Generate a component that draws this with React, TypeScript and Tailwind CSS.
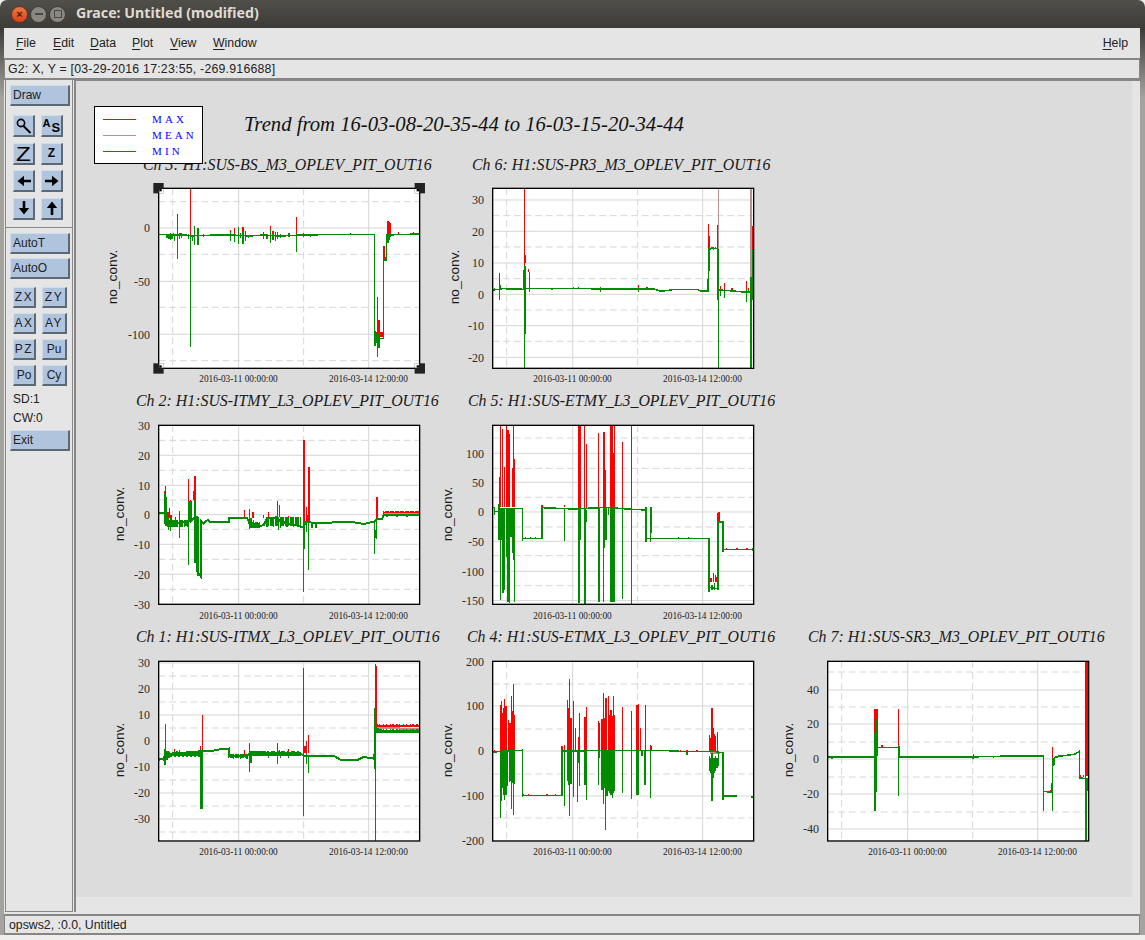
import React from 'react';

type Seg = [number, number, number];
type Pt = [number, number];

type ChartData = {
  key: string;
  box: string;
  title: string;
  titleX: number;
  titleY: number;
  labelX: number;
  ox: number;
  oy: number;
  height: number;
  lineWidth: number;
  major: { y: number; label: string }[];
  minor: number[];
  line: Pt[];
  line2?: Pt[];
  redLine?: Pt[];
  meanLine?: Pt[];
  green: Seg[];
  red: Seg[];
  mean?: Seg[];
  selected?: boolean;
};

// fuzz on a flat part of a trace, same result every run
const noise = (from: number, to: number, step: number, top: number, bottom: number): Seg[] => {
  const out: Seg[] = [];
  for (let x = from; x <= to; x += step) {
    const k = (x * 7) % 5;
    out.push([x, top + k, bottom - ((x * 3) % 4)]);
  }
  return out;
};

const charts: ChartData[] = [
  {
    key: 'ch3', box: 'left-[82px] top-[107px]', title: 'Ch 3: H1:SUS-BS_M3_OPLEV_PIT_OUT16', titleX: -15, titleY: -18, labelX: -41, ox: 205, oy: 265, height: 540, lineWidth: 4.5,
    major: [{ y: 119, label: '0' }, { y: 279, label: '-50' }, { y: 438, label: '-100' }],
    minor: [40, 198, 357, 517],
    line: [[205, 403], [228, 403], [240, 406], [275, 405], [295, 406], [300, 408], [340, 406], [420, 405], [480, 408], [520, 405], [570, 408], [640, 405], [700, 404], [800, 404], [852, 403], [852, 716], [880, 716], [880, 480], [889, 480], [889, 405], [985, 402]],
    green: [[230, 403, 415], [236, 403, 418], [240, 403, 420], [245, 403, 416], [252, 403, 422], [262, 403, 476], [268, 403, 418], [273, 403, 414], [295, 403, 418], [301, 405, 740], [307, 405, 422], [313, 378, 436], [323, 383, 436], [340, 403, 410], [420, 395, 423], [432, 400, 427], [445, 380, 432], [450, 400, 415], [458, 395, 433], [465, 400, 422], [475, 405, 414], [485, 405, 412], [520, 398, 417], [530, 402, 418], [540, 390, 428], [548, 400, 420], [555, 400, 424], [562, 400, 418], [570, 403, 414], [580, 405, 412], [596, 400, 411], [619, 400, 456], [640, 403, 410], [660, 403, 410], [854, 700, 738], [858, 700, 728], [862, 710, 770], [866, 700, 745], [880, 470, 482], [889, 420, 432], [893, 405, 428], [897, 398, 420], [901, 400, 412]],
    red: [[240, 400, 406], [250, 400, 406], [262, 342, 405], [268, 398, 405], [272, 400, 405], [301, 265, 405], [340, 402, 405], [360, 402, 405], [420, 390, 403], [432, 383, 405], [445, 380, 403], [458, 380, 403], [465, 392, 403], [520, 396, 403], [540, 378, 403], [548, 392, 403], [555, 395, 403], [562, 396, 403], [619, 351, 403], [640, 400, 405], [780, 400, 405], [854, 692, 708], [858, 695, 708], [862, 591, 710], [866, 660, 710], [870, 695, 710], [875, 697, 710], [881, 437, 480], [885, 470, 480], [893, 363, 405], [897, 366, 405], [901, 370, 400], [925, 396, 403], [970, 395, 403]],
    selected: true,
  },
  {
    key: 'ch6', box: 'left-[416px] top-[107px]', title: 'Ch 6: H1:SUS-PR3_M3_OPLEV_PIT_OUT16', titleX: -20, titleY: -18, labelX: -33, ox: 157, oy: 115, height: 540, lineWidth: 4.5,
    major: [{ y: 35, label: '30' }, { y: 129, label: '20' }, { y: 224, label: '10' }, { y: 318, label: '0' }, { y: 412, label: '-10' }, { y: 507, label: '-20' }],
    minor: [82, 176, 271, 365, 459],
    line: [[157, 420], [175, 418], [185, 416], [230, 417], [250, 418], [255, 415], [400, 415], [480, 417], [590, 417], [640, 417], [660, 423], [680, 422], [700, 418], [770, 418], [780, 423], [803, 424], [806, 296], [832, 296], [835, 420], [880, 423], [920, 427], [930, 425], [940, 425]],
    green: [[163, 415, 424], [178, 405, 450], [181, 405, 418], [250, 360, 420], [253, 345, 655], [256, 348, 552], [268, 367, 425], [335, 415, 420], [480, 412, 426], [595, 410, 426], [640, 415, 420], [806, 295, 362], [810, 295, 300], [820, 292, 300], [833, 308, 450], [835, 296, 655], [841, 420, 438], [853, 418, 444], [919, 420, 456], [925, 420, 430], [932, 380, 655], [934, 380, 655], [937, 297, 450]],
    red: [[178, 368, 415], [253, 115, 415], [256, 315, 340], [265, 358, 365], [400, 412, 417], [415, 412, 417], [480, 410, 417], [595, 405, 417], [620, 412, 417], [805, 222, 318], [808, 258, 300], [815, 290, 296], [826, 290, 296], [832, 225, 296], [841, 408, 420], [853, 398, 420], [875, 415, 422], [919, 393, 425], [925, 415, 425], [937, 228, 300]],
    mean: [[835, 115, 296], [932, 115, 380], [934, 115, 380]],
  },
  {
    key: 'ch2', box: 'left-[82px] top-[344px]', title: 'Ch 2: H1:SUS-ITMY_L3_OPLEV_PIT_OUT16', titleX: -22, titleY: -19, labelX: -34, ox: 175, oy: 106, height: 537, lineWidth: 6,
    major: [{ y: 0, label: '30' }, { y: 90, label: '20' }, { y: 180, label: '10' }, { y: 268, label: '0' }, { y: 357, label: '-10' }, { y: 447, label: '-20' }, { y: 537, label: '-30' }],
    minor: [45, 135, 224, 312, 402, 492],
    line: [[175, 369], [195, 369], [195, 400], [220, 400], [245, 396], [262, 392], [265, 392], [265, 335], [272, 335], [272, 392], [285, 380], [290, 380], [291, 545], [301, 558], [301, 392], [310, 400], [322, 390], [330, 396], [385, 397], [388, 384], [440, 384], [450, 405], [470, 412], [490, 405], [500, 385], [530, 382], [540, 395], [565, 400], [610, 412], [615, 395], [650, 400], [670, 400], [720, 395], [760, 397], [790, 402], [820, 395], [830, 388], [845, 388], [850, 375], [958, 376]],
    redLine: [[850, 368], [958, 368]],
    meanLine: [[850, 372], [958, 372]],
    green: [...noise(197, 262, 5, 385, 412), ...noise(450, 480, 4, 395, 416), ...noise(500, 600, 5, 382, 410), [193, 310, 400], [197, 320, 400], [200, 380, 405], [205, 380, 420], [210, 385, 422], [218, 390, 410], [228, 390, 405], [238, 390, 443], [265, 340, 525], [270, 332, 400], [284, 330, 518], [290, 380, 545], [293, 380, 558], [301, 390, 563], [385, 380, 400], [448, 378, 416], [452, 385, 413], [460, 390, 412], [505, 380, 400], [515, 380, 403], [525, 378, 395], [535, 380, 420], [540, 390, 415], [610, 385, 605], [612, 395, 476], [618, 395, 425], [625, 400, 540], [635, 400, 415], [647, 396, 414], [823, 392, 493], [826, 420, 445], [829, 388, 447], [860, 372, 380], [890, 372, 380], [920, 372, 380], [950, 372, 378]],
    red: [...noise(850, 958, 5, 364, 372), [193, 303, 320], [196, 288, 320], [203, 365, 385], [208, 354, 385], [212, 374, 392], [225, 380, 400], [238, 363, 395], [265, 267, 340], [270, 330, 340], [281, 303, 330], [284, 258, 330], [291, 510, 520], [301, 388, 395], [433, 360, 385], [448, 357, 385], [458, 365, 385], [490, 376, 385], [505, 367, 385], [532, 333, 380], [538, 345, 380], [565, 378, 400], [611, 150, 390], [613, 297, 395], [618, 350, 395], [622, 375, 395], [626, 231, 395], [830, 321, 388], [826, 424, 432], [850, 368, 375]],
  },
  {
    key: 'ch5', box: 'left-[416px] top-[344px]', title: 'Ch 5: H1:SUS-ETMY_L3_OPLEV_PIT_OUT16', titleX: -24, titleY: -19, labelX: -40, ox: 157, oy: 106, height: 537, lineWidth: 4.5,
    major: [{ y: 84, label: '100' }, { y: 171, label: '50' }, { y: 260, label: '0' }, { y: 348, label: '-50' }, { y: 438, label: '-100' }, { y: 526, label: '-150' }],
    minor: [38, 129, 216, 305, 391, 481],
    line: [[157, 352], [163, 352], [163, 365], [178, 365], [182, 355], [247, 355], [247, 445], [305, 445], [305, 353], [350, 355], [400, 357], [440, 355], [500, 352], [560, 357], [615, 360], [617, 445], [800, 446], [806, 446], [806, 592], [832, 596], [832, 396], [848, 396], [848, 478], [940, 478]],
    green: [[163, 352, 375], [175, 342, 450], [178, 342, 450], [181, 355, 630], [185, 355, 450], [188, 355, 610], [193, 355, 600], [198, 355, 500], [201, 355, 635], [205, 355, 635], [208, 355, 640], [212, 355, 440], [217, 355, 490], [219, 355, 510], [222, 355, 635], [247, 355, 452], [373, 355, 452], [416, 355, 640], [420, 355, 450], [434, 355, 642], [438, 360, 395], [475, 355, 450], [476, 355, 636], [490, 355, 635], [493, 355, 475], [497, 355, 450], [505, 355, 375], [512, 355, 635], [516, 355, 635], [519, 355, 635], [523, 355, 635], [547, 355, 627], [574, 355, 642], [617, 350, 455], [630, 350, 457], [634, 350, 430], [806, 560, 607], [815, 585, 600], [822, 580, 600], [833, 396, 600], [835, 396, 425], [848, 396, 486], [938, 474, 484]],
    red: [[178, 260, 355], [181, 106, 350], [187, 118, 350], [193, 230, 350], [198, 106, 350], [203, 120, 350], [207, 132, 350], [217, 233, 350], [220, 106, 350], [223, 207, 350], [305, 345, 352], [373, 346, 352], [416, 106, 355], [419, 106, 355], [433, 106, 355], [438, 162, 355], [475, 130, 355], [490, 127, 355], [493, 127, 355], [496, 240, 355], [512, 106, 355], [515, 106, 355], [519, 190, 355], [523, 106, 355], [547, 155, 355], [574, 106, 355], [616, 352, 358], [630, 352, 400], [634, 360, 400], [806, 537, 575], [812, 565, 575], [820, 548, 575], [825, 556, 575], [829, 562, 575], [833, 368, 396], [836, 366, 396], [650, 443, 446], [715, 441, 446], [745, 441, 446], [255, 441, 445], [270, 441, 445], [285, 441, 445], [858, 474, 478], [890, 474, 478], [920, 474, 478], [938, 474, 478]],
  },
  {
    key: 'ch1', box: 'left-[82px] top-[580px]', title: 'Ch 1: H1:SUS-ITMX_L3_OPLEV_PIT_OUT16', titleX: -22, titleY: -19, labelX: -34, ox: 175, oy: 110, height: 539, lineWidth: 6,
    major: [{ y: 5, label: '30' }, { y: 83, label: '20' }, { y: 161, label: '10' }, { y: 239, label: '0' }, { y: 317, label: '-10' }, { y: 395, label: '-20' }, { y: 473, label: '-30' }],
    minor: [44, 122, 200, 278, 356, 434, 512],
    line: [[175, 405], [195, 400], [205, 392], [240, 385], [300, 380], [340, 378], [370, 372], [385, 375], [385, 393], [440, 395], [450, 383], [495, 383], [510, 392], [540, 385], [600, 385], [612, 395], [650, 393], [700, 393], [720, 405], [770, 407], [790, 397], [822, 402], [826, 310], [850, 320], [958, 320]],
    redLine: [[830, 303], [958, 304]],
    meanLine: [[830, 311], [958, 312]],
    green: [...noise(830, 958, 4, 313, 328), ...noise(200, 300, 6, 380, 396), ...noise(390, 440, 5, 388, 402), ...noise(455, 600, 6, 378, 396), [178, 400, 410], [190, 395, 408], [193, 372, 420], [196, 297, 422], [200, 385, 405], [206, 385, 400], [223, 380, 392], [237, 380, 398], [301, 380, 553], [305, 380, 553], [385, 370, 400], [400, 390, 400], [448, 385, 443], [452, 385, 415], [505, 385, 400], [532, 385, 418], [540, 385, 400], [565, 385, 400], [610, 385, 573], [618, 385, 418], [625, 390, 446], [826, 180, 650], [824, 250, 432], [822, 395, 405]],
    red: [...noise(830, 958, 4, 298, 309), [193, 372, 385], [205, 380, 395], [223, 372, 385], [237, 375, 385], [300, 363, 380], [307, 270, 380], [388, 368, 380], [433, 375, 390], [448, 354, 385], [505, 380, 385], [532, 354, 385], [537, 375, 385], [565, 372, 385], [610, 130, 385], [614, 365, 385], [619, 350, 385], [625, 330, 385], [825, 117, 180], [829, 125, 310], [850, 297, 310]],
  },
  {
    key: 'ch4', box: 'left-[416px] top-[580px]', title: 'Ch 4: H1:SUS-ETMX_L3_OPLEV_PIT_OUT16', titleX: -25, titleY: -19, labelX: -40, ox: 157, oy: 110, height: 539, lineWidth: 4.5,
    major: [{ y: 0, label: '200' }, { y: 134, label: '100' }, { y: 269, label: '0' }, { y: 404, label: '-100' }, { y: 539, label: '-200' }],
    minor: [68, 203, 338, 470],
    line: [[157, 383], [180, 380], [247, 377], [247, 512], [365, 512], [365, 379], [560, 377], [600, 377], [680, 378], [740, 381], [805, 381], [810, 378], [848, 385], [848, 514], [890, 514]],
    line2: [[933, 517], [940, 517]],
    meanLine: [[808, 385], [838, 385]],
    green: [[181, 378, 580], [184, 378, 530], [187, 378, 490], [190, 378, 510], [193, 378, 525], [196, 378, 510], [199, 378, 512], [202, 378, 485], [208, 378, 473], [211, 378, 470], [214, 378, 552], [217, 378, 475], [220, 378, 570], [223, 378, 478], [247, 377, 518], [365, 379, 490], [373, 379, 545], [382, 379, 470], [385, 379, 480], [388, 379, 573], [392, 379, 478], [400, 379, 518], [412, 379, 533], [416, 379, 415], [418, 379, 485], [434, 379, 480], [439, 379, 525], [475, 379, 480], [478, 379, 400], [485, 379, 495], [490, 379, 537], [494, 379, 490], [496, 379, 615], [500, 379, 515], [505, 379, 500], [508, 379, 505], [512, 379, 510], [516, 379, 520], [520, 379, 505], [523, 379, 498], [547, 379, 504], [574, 379, 522], [590, 379, 510], [595, 379, 510], [605, 379, 395], [614, 379, 480], [630, 379, 519], [740, 379, 390], [808, 395, 440], [812, 400, 445], [815, 385, 530], [818, 400, 460], [822, 400, 445], [826, 395, 440], [830, 400, 430], [835, 385, 425], [848, 385, 525]],
    red: [[162, 375, 380], [181, 240, 378], [184, 228, 378], [187, 265, 378], [190, 250, 378], [193, 222, 378], [196, 245, 378], [199, 245, 378], [205, 285, 378], [209, 295, 378], [214, 213, 378], [218, 260, 378], [220, 177, 378], [223, 270, 378], [247, 372, 378], [365, 365, 379], [373, 360, 379], [382, 225, 379], [385, 250, 379], [388, 162, 379], [392, 280, 379], [400, 228, 379], [405, 310, 379], [415, 338, 379], [418, 265, 379], [434, 278, 379], [439, 247, 379], [475, 290, 379], [478, 295, 379], [485, 282, 379], [490, 205, 379], [494, 280, 379], [497, 220, 379], [505, 215, 379], [508, 270, 379], [512, 255, 379], [516, 275, 379], [520, 215, 379], [523, 270, 379], [547, 248, 379], [574, 260, 379], [590, 242, 379], [595, 237, 379], [600, 310, 379], [615, 242, 379], [630, 360, 379], [632, 364, 379], [250, 508, 512], [265, 508, 512], [320, 508, 512], [345, 508, 512], [720, 375, 381], [740, 376, 381], [770, 376, 381], [808, 330, 382], [812, 340, 382], [815, 250, 382], [818, 310, 382], [822, 328, 382], [826, 335, 382], [832, 323, 382]],
  },
  {
    key: 'ch7', box: 'left-[751px] top-[580px]', title: 'Ch 7: H1:SUS-SR3_M3_OPLEV_PIT_OUT16', titleX: -19, titleY: -19, labelX: -34, ox: 112, oy: 110, height: 539, lineWidth: 4.5,
    major: [{ y: 86, label: '40' }, { y: 188, label: '20' }, { y: 293, label: '0' }, { y: 398, label: '-20' }, { y: 503, label: '-40' }],
    minor: [32, 137, 242, 347, 452],
    line: [[112, 397], [248, 397], [253, 395], [262, 368], [325, 368], [326, 397], [550, 397], [600, 395], [760, 394], [760, 500], [785, 503], [788, 403], [800, 395], [830, 392], [855, 388], [867, 380], [868, 460], [895, 462]],
    green: [[125, 395, 402], [252, 325, 560], [255, 325, 560], [258, 282, 503], [261, 320, 395], [324, 365, 515], [326, 365, 400], [760, 394, 560], [787, 410, 560], [793, 400, 420], [800, 395, 400], [887, 460, 650], [891, 460, 500], [885, 455, 465], [548, 395, 402], [610, 395, 400]],
    red: [[125, 393, 397], [155, 393, 397], [170, 393, 397], [190, 393, 397], [230, 393, 397], [252, 252, 325], [255, 252, 325], [258, 252, 300], [261, 252, 340], [275, 360, 368], [325, 252, 365], [340, 393, 397], [420, 393, 397], [450, 393, 397], [470, 393, 397], [510, 393, 397], [550, 388, 397], [575, 393, 397], [763, 498, 502], [772, 498, 502], [780, 495, 502], [787, 366, 410], [792, 396, 402], [870, 450, 460], [886, 110, 455], [890, 110, 455], [880, 452, 456]],
  },
];

const segPath = (segs: Seg[], ox: number, oy: number) =>
  segs.map(([x, a, b]) => `M${x - ox} ${a - oy}V${b - oy}`).join('');

const linePath = (pts: Pt[], ox: number, oy: number) =>
  pts.map(([x, y], i) => `${i ? 'L' : 'M'}${x - ox} ${y - oy}`).join('');

// corner handles of the selected graph, the quarter inside the frame is inverted
const Handle = ({ x, y }: { x: number; y: number }) => {
  const dx = x === 0 ? 1 : -1;
  const dy = y === 0 ? 1 : -1;
  return (
    <g transform={`translate(${x} ${y}) scale(${dx} ${dy})`}>
      <rect x={-16} y={-16} width={31} height={31} fill="#222" />
      <rect x={2} y={2} width={13} height={13} fill="#fff" />
      <rect x={2} y={2} width={7} height={7} fill="#000" />
    </g>
  );
};

const Chart = ({ c }: { c: ChartData }) => {
  const clip = `clip-${c.key}`;
  return (
    <svg className={`absolute overflow-visible w-[261px] h-[180px] ${c.box}`} viewBox="0 0 261 180">
      <text x={c.titleX} y={c.titleY} className="font-['Liberation_Serif'] italic text-[15.9px] fill-[#1a1a1a]">{c.title}</text>
      <g transform="scale(0.3333) translate(2 1)">
        <rect x={0} y={0} width={783} height={c.height} fill="#fff" />
        <clipPath id={clip}><rect x={0} y={0} width={783} height={c.height} /></clipPath>
        <g fill="none" stroke="#d6d6d6" strokeWidth={3}>
          {c.major.map((m) => <path key={m.y} d={`M0 ${m.y}H783`} />)}
          <path d={`M240 0V${c.height}M630 0V${c.height}`} />
          <g strokeDasharray="20 12">
            {c.minor.map((y) => <path key={y} d={`M0 ${y}H783`} />)}
            <path d={`M42 0V${c.height}M435 0V${c.height}`} />
          </g>
        </g>
        <g fill="none" clipPath={`url(#${clip})`} shapeRendering="crispEdges">
          <path d={segPath(c.red, c.ox, c.oy)} stroke="#ff0000" strokeWidth={4.2} />
          {c.redLine && <path d={linePath(c.redLine, c.ox, c.oy)} stroke="#ff0000" strokeWidth={5} />}
          {c.mean && <path d={segPath(c.mean, c.ox, c.oy)} stroke="#bc8f8f" strokeWidth={3.6} />}
          {c.meanLine && <path d={linePath(c.meanLine, c.ox, c.oy)} stroke="#bc8f8f" strokeWidth={6} />}
          <path d={segPath(c.green, c.ox, c.oy)} stroke="#008b00" strokeWidth={4.2} />
          <path d={linePath(c.line, c.ox, c.oy)} stroke="#008b00" strokeWidth={c.lineWidth} />
          {c.line2 && <path d={linePath(c.line2, c.ox, c.oy)} stroke="#008b00" strokeWidth={c.lineWidth} />}
        </g>
        <rect x={0} y={0} width={783} height={c.height} fill="none" stroke="#000" strokeWidth={4} />
        {c.selected && (
          <>
            <Handle x={0} y={0} />
            <Handle x={783} y={0} />
            <Handle x={0} y={c.height} />
            <Handle x={783} y={c.height} />
          </>
        )}
      </g>
      {c.major.map((m) => (
        <text key={m.y} x={-8} y={m.y / 3 + 4.5} textAnchor="end" className="font-['Liberation_Serif'] text-[12px] fill-[#2a2a2a]">{m.label}</text>
      ))}
      <text x={80.5} y={194} textAnchor="middle" className="font-['Liberation_Serif'] text-[9.3px] fill-[#1a1a1a]">2016-03-11 00:00:00</text>
      <text x={210.5} y={194} textAnchor="middle" className="font-['Liberation_Serif'] text-[9.3px] fill-[#1a1a1a]">2016-03-14 12:00:00</text>
      <text transform={`translate(${c.labelX} 89) rotate(-90)`} textAnchor="middle" className="font-['Liberation_Sans'] text-[13.7px] fill-[#1a1a1a]">no_conv.</text>
    </svg>
  );
};

const Button = ({ children, className = '' }: { children: React.ReactNode; className?: string }) => (
  <div className={`flex items-center bg-[#b0c4de] border-t border-l border-t-[#cfdcec] border-l-[#cfdcec] border-r-2 border-b-2 border-r-[#5d6875] border-b-[#5d6875] text-[12px] leading-none text-[#222] ${className}`}>
    {children}
  </div>
);

const WideButton = ({ label, className = '' }: { label: string; className?: string }) => (
  <Button className={`w-[60px] h-[21px] pl-[2px] ${className}`}>{label}</Button>
);

const SmallButton = ({ label, className = '' }: { label: string; className?: string }) => (
  <Button className={`h-[21px] justify-center ${className}`}>{label}</Button>
);

const IconButton = ({ children }: { children: React.ReactNode }) => (
  <Button className="w-[22px] h-[22px] justify-center">{children}</Button>
);

const ArrowIcon = ({ rotate }: { rotate: string }) => (
  <svg viewBox="0 0 16 16" className={`w-[16px] h-[16px] ${rotate}`}>
    <path d="M1.5 8L8 2.8V6.7H15V9.3H8V13.2Z" fill="#000" />
  </svg>
);

const menus = ['File', 'Edit', 'Data', 'Plot', 'View', 'Window'];
const menuGaps = ['w-[37px]', 'w-[37px]', 'w-[42px]', 'w-[38px]', 'w-[43px]', 'w-auto'];

const MenuItem = ({ label }: { label: string }) => (
  <span><span className="underline underline-offset-2">{label[0]}</span>{label.slice(1)}</span>
);

const Legend = () => (
  <div className="absolute left-[18px] top-[25px] w-[109px] h-[58px] bg-white border border-black flex flex-col pt-[4px] pl-[8px] font-['Liberation_Serif'] text-[11px] tracking-[3.1px] text-[#0000ff] leading-[16px]">
    {[['MAX', 'bg-[#ff0000]'], ['MEAN', 'bg-[#bc8f8f]'], ['MIN', 'bg-[#008b00]']].map(([name, color]) => (
      <div key={name} className="flex items-center h-[16px]">
        <div className={`w-[33px] h-px ${color}`} />
        <span className="ml-[16px]">{name}</span>
      </div>
    ))}
  </div>
);

export default function App() {
  return (
    <div className="w-[1145px] h-[940px] flex flex-col overflow-hidden font-['Liberation_Sans',sans-serif] bg-[#efeeec]">
      <div className="h-[28px] shrink-0 flex items-center rounded-t-[7px] bg-gradient-to-b from-[#504f4a] to-[#3c3b37]">
        <div className="flex items-center ml-[11px] gap-[2px]">
          <div className="w-[17px] h-[17px] rounded-full bg-gradient-to-b from-[#f0783f] to-[#d8431c] border border-[#6b3020] flex items-center justify-center text-[11px] leading-none font-bold text-[#4a1a0c]">×</div>
          <div className="w-[17px] h-[17px] rounded-full bg-[#8a8880] border border-[#3a3934] flex items-center justify-center">
            <div className="w-[8px] h-[2px] bg-[#4a4944]" />
          </div>
          <div className="w-[17px] h-[17px] rounded-full bg-[#8a8880] border border-[#3a3934] flex items-center justify-center">
            <div className="w-[8px] h-[8px] border border-[#4a4944]" />
          </div>
        </div>
        <span className="ml-[10px] mb-[2px] font-['Noto_Sans'] font-bold text-[14.2px] text-[#dfdbd2]">Grace: Untitled (modified)</span>
      </div>

      <div className="h-[907px] shrink-0 pl-[4px] pr-[5px] bg-[linear-gradient(#3c3b37,#a5a39d_70px)]">
        <div className="h-full flex flex-col bg-[#e5e5e5] text-[#222]">
          <div className="h-[29px] shrink-0 flex items-center pl-[12px] pr-[12px] pt-px text-[12.3px] text-[#222]">
            {menus.map((m, i) => (
              <div key={m} className={menuGaps[i]}><MenuItem label={m} /></div>
            ))}
            <div className="ml-auto"><MenuItem label="Help" /></div>
          </div>
          <div className="h-[22px] shrink-0 flex items-center pl-[3px] border-2 border-[#858585] border-l border-r text-[12.3px] tracking-[0.23px] mt-px">
            G2: X, Y = [03-29-2016 17:23:55, -269.916688]
          </div>

          <div className="h-[832px] shrink-0 flex">
            <div className="w-[68px] ml-px shrink-0 border border-t-0 border-[#888] flex flex-col items-start pt-[5px] pl-[4px]">
              <WideButton label="Draw" />
              <div className="grid grid-cols-[22px_22px] gap-x-[6px] gap-y-[5.5px] ml-[3px] mt-[9px]">
                <IconButton>
                  <svg viewBox="0 0 18 18" className="w-[18px] h-[18px]">
                    <circle cx="6" cy="6" r="3.6" fill="none" stroke="#000" strokeWidth="1.6" />
                    <path d="M8.5 9L15.5 16" stroke="#000" strokeWidth="2" />
                  </svg>
                </IconButton>
                <IconButton>
                  <span className="relative w-[18px] h-[16px] font-bold leading-none text-black">
                    <span className="absolute left-0 top-0 text-[11px]">A</span>
                    <span className="absolute left-[9px] top-[3px] text-[13px]">S</span>
                  </span>
                </IconButton>
                <IconButton><span className="text-[21px] leading-none scale-x-[1.15] text-black">Z</span></IconButton>
                <IconButton><span className="text-[12px] font-bold leading-none text-black">Z</span></IconButton>
                <IconButton><ArrowIcon rotate="rotate-0" /></IconButton>
                <IconButton><ArrowIcon rotate="rotate-180" /></IconButton>
                <IconButton><ArrowIcon rotate="-rotate-90" /></IconButton>
                <IconButton><ArrowIcon rotate="rotate-90" /></IconButton>
              </div>
              <div className="w-[66px] -ml-[4px] mt-[7px] h-px bg-[#888]" />
              <WideButton label="AutoT" className="mt-[5px]" />
              <WideButton label="AutoO" className="mt-[4px]" />
              <div className="grid grid-cols-[23px_25px] gap-x-[6px] gap-y-[5px] ml-[3px] mt-[8px]">
                <SmallButton label="ZX" className="tracking-[1.5px]" />
                <SmallButton label="ZY" className="tracking-[1.5px]" />
                <SmallButton label="AX" className="tracking-[1.5px]" />
                <SmallButton label="AY" className="tracking-[1.5px]" />
                <SmallButton label="PZ" className="tracking-[1.5px]" />
                <SmallButton label="Pu" />
                <SmallButton label="Po" />
                <SmallButton label="Cy" />
              </div>
              <div className="text-[12px] leading-none mt-[7px] ml-[3px]">SD:1</div>
              <div className="text-[12px] leading-none mt-[7px] ml-[3px]">CW:0</div>
              <WideButton label="Exit" className="mt-[6px]" />
            </div>

            <div className="flex-1 ml-px border-l-2 border-t border-[#888] pr-[8px] pb-[15px]">
              <div className="relative h-full bg-[#dcdcdc]">
                {charts.map((c) => <Chart key={c.key} c={c} />)}
                <Legend />
                <div className="absolute left-[168px] top-[29px] font-['Liberation_Serif'] italic text-[20.7px] leading-[28px] text-[#111] whitespace-nowrap">
                  Trend from 16-03-08-20-35-44 to 16-03-15-20-34-44
                </div>
              </div>
            </div>
          </div>

          <div className="h-[21px] shrink-0 flex items-center pl-[4px] pt-px mt-[2px] border-y-2 border-x border-[#858585] text-[12.3px]">
            opsws2, :0.0, Untitled
          </div>
        </div>
      </div>
    </div>
  );
}
